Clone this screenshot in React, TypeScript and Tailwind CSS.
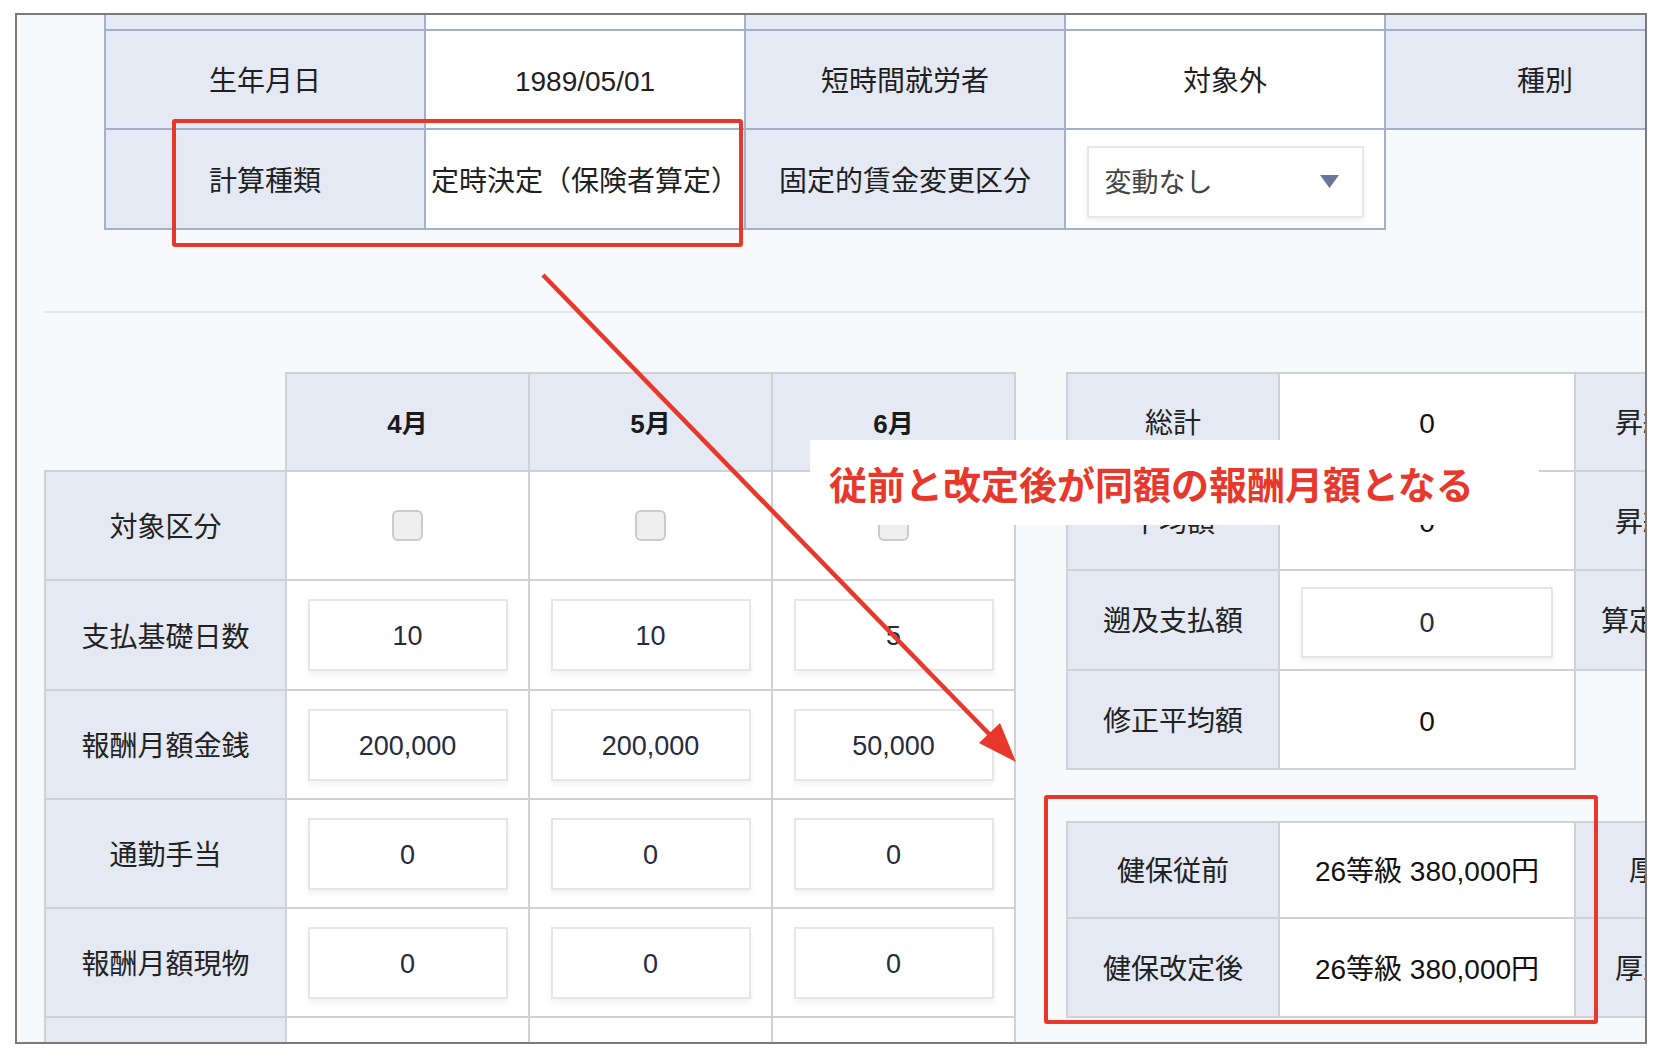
import React from 'react';

// colours picked from the screenshot
const HEAD = 'bg-[#e5e9f3]';
const TOP_LINE = 'border-[#a3b0cc]';
const GRID_LINE = 'border-[#d0d1d4]';

type TopCell = { head?: boolean; content?: React.ReactNode };

const Dropdown: React.FC<{ value: string }> = ({ value }) => (
  <div className="w-[277px] h-[72px] bg-white border-2 border-[#e8e8e8] shadow-[0_3px_6px_rgba(0,0,0,0.06)] flex items-center justify-between pl-[16px] pr-[23px]">
    <span className="text-[27px] text-[#444] pt-[3px]">{value}</span>
    <svg width="19" height="13" viewBox="0 0 19 13">
      <polygon points="0,0 19,0 9.5,13" fill="#6b7399" />
    </svg>
  </div>
);

const topRows: { h: string; cells: TopCell[] }[] = [
  { h: 'h-[100px]', cells: [{ head: true }, {}, { head: true }, {}, { head: true }] },
  {
    h: 'h-[99px]',
    cells: [
      { head: true, content: '生年月日' },
      { content: '1989/05/01' },
      { head: true, content: '短時間就労者' },
      { content: '対象外' },
      { head: true, content: '種別' },
    ],
  },
  {
    h: 'h-[100px]',
    cells: [
      { head: true, content: '計算種類' },
      { content: '定時決定（保険者算定）' },
      { head: true, content: '固定的賃金変更区分' },
      { content: <Dropdown value="変動なし" /> },
    ],
  },
];

const InputBox: React.FC<{ value: string; w?: string; h?: string }> = ({ value, w = 'w-[200px]', h = 'h-[72px]' }) => (
  <div className={`${w} ${h} bg-white border-2 border-[#e6e6e6] shadow-[0_4px_6px_rgba(0,0,0,0.05)] flex items-center justify-center pt-[3px] text-[27px] text-[#262b40]`}>
    {value}
  </div>
);

const Checkbox = () => (
  <div className="w-[31px] h-[31px] rounded-[6px] border-2 border-[#cbcbcb] bg-[#efefef]" />
);

const monthRows: { label: string; h: string; check?: boolean; vals?: string[] }[] = [
  { label: '対象区分', h: 'h-[109px]', check: true },
  { label: '支払基礎日数', h: 'h-[110px]', vals: ['10', '10', '5'] },
  { label: '報酬月額金銭', h: 'h-[109px]', vals: ['200,000', '200,000', '50,000'] },
  { label: '通勤手当', h: 'h-[109px]', vals: ['0', '0', '0'] },
  { label: '報酬月額現物', h: 'h-[109px]', vals: ['0', '0', '0'] },
  { label: '', h: 'h-[110px]' },
];

type SideRow = { h: string; label: string; value: React.ReactNode; extra?: string };

const sideRows: SideRow[] = [
  { h: 'h-[100px]', label: '総計', value: '0', extra: '昇給差の月' },
  { h: 'h-[99px]', label: '平均額', value: '0', extra: '昇給差月額' },
  { h: 'h-[100px]', label: '遡及支払額', value: <InputBox value="0" w="w-[252px]" h="h-[71px]" />, extra: '算定基礎届出' },
  { h: 'h-[99px]', label: '修正平均額', value: '0' },
];

const gradeRows: SideRow[] = [
  { h: 'h-[98px]', label: '健保従前', value: '26等級 380,000円', extra: '厚生従前' },
  { h: 'h-[99px]', label: '健保改定後', value: '26等級 380,000円', extra: '厚生改定後' },
];

const SideTable: React.FC<{ rows: SideRow[] }> = ({ rows }) => (
  <div className="flex flex-col">
    {rows.map((r, i) => (
      <div key={r.label} className={`flex ${r.h} shrink-0`}>
        <div className={`w-[214px] shrink-0 ${HEAD} border-l-2 border-r-2 border-b-2 ${i === 0 ? 'border-t-2' : ''} ${GRID_LINE} flex items-center justify-center pt-[4px] text-[28px] text-[#222]`}>
          {r.label}
        </div>
        <div className={`w-[296px] shrink-0 bg-white border-r-2 border-b-2 ${i === 0 ? 'border-t-2' : ''} ${GRID_LINE} flex items-center justify-center pt-[4px] text-[28px] text-[#111]`}>
          {r.value}
        </div>
        {r.extra && (
          <div className={`w-[220px] shrink-0 ${HEAD} border-r-2 border-b-2 ${i === 0 ? 'border-t-2' : ''} ${GRID_LINE} flex items-center justify-center pt-[4px] text-[28px] text-[#222] whitespace-nowrap`}>
            {r.extra}
          </div>
        )}
      </div>
    ))}
  </div>
);

export default function App() {
  return (
    <div className="relative w-[1654px] h-[1058px] bg-white overflow-hidden pt-[13px] pl-[15px] font-['Liberation_Sans','Noto_Sans_CJK_JP',sans-serif]">
      {/* framed screenshot area */}
      <div className="w-[1632px] h-[1031px] border-2 border-[#7a7a7a] bg-[#f8f9fb] overflow-hidden">
        {/* employee info table, scrolled so its first row is cut */}
        <div className={`ml-[87px] mt-[-84px] border-l-2 ${TOP_LINE} w-max`}>
          {topRows.map((row, ri) => (
            <div key={ri} className={`flex ${row.h}`}>
              {row.cells.map((c, ci) => (
                <div
                  key={ci}
                  className={`w-[320px] shrink-0 border-r-2 border-b-2 ${TOP_LINE} ${c.head ? HEAD : 'bg-white'} flex items-center justify-center pt-[5px] text-[28px] text-[#1f1f1f] whitespace-nowrap`}
                >
                  {c.content}
                </div>
              ))}
            </div>
          ))}
        </div>

        <div className="mt-[81px] ml-[27px] h-[2px] bg-[#e3e5ea]" />

        <div className="mt-[59px] flex items-start">
          {/* monthly table */}
          <div className="ml-[27px] flex flex-col shrink-0">
            <div className="flex h-[100px]">
              <div className={`w-[243px] border-r-2 border-b-2 ${GRID_LINE}`} />
              {['4月', '5月', '6月'].map((m) => (
                <div key={m} className={`w-[243px] ${HEAD} border-t-2 border-r-2 border-b-2 ${GRID_LINE} flex items-center justify-center pt-[4px] text-[26px] font-bold text-[#1a1a1a]`}>
                  {m}
                </div>
              ))}
            </div>
            {monthRows.map((r, i) => (
              <div key={i} className={`flex ${r.h} shrink-0`}>
                <div className={`w-[243px] ${HEAD} border-l-2 border-r-2 border-b-2 ${GRID_LINE} flex items-center justify-center pt-[5px] text-[28px] text-[#222]`}>
                  {r.label}
                </div>
                {[0, 1, 2].map((k) => (
                  <div key={k} className={`w-[243px] bg-white border-r-2 border-b-2 ${GRID_LINE} flex items-center justify-center`}>
                    {r.check && <Checkbox />}
                    {r.vals && <InputBox value={r.vals[k]} />}
                  </div>
                ))}
              </div>
            ))}
          </div>

          {/* totals and grades */}
          <div className="ml-[50px] flex flex-col shrink-0">
            <SideTable rows={sideRows} />
            <div className="mt-[51px]">
              <SideTable rows={gradeRows} />
            </div>
          </div>
        </div>
      </div>

      {/* annotation overlays */}
      <div className="absolute left-[172px] top-[119px] w-[571px] h-[128px] border-4 border-[#e8372b] rounded-[3px]" />
      <div className="absolute left-[1044px] top-[795px] w-[554px] h-[229px] border-4 border-[#e8372b] rounded-[3px]" />
      <svg className="absolute left-0 top-0" width="1654" height="1058" viewBox="0 0 1654 1058">
        <line x1="543" y1="275" x2="992" y2="737" stroke="#e8372b" strokeWidth="4.5" />
        <polygon points="1016,762 979,743 1000,723" fill="#e8372b" />
      </svg>
      <div className="absolute left-[810px] top-[440px] w-[729px] h-[85px] bg-white flex items-center pl-[19px]">
        <span className="text-[38px] font-bold text-[#e8372b] font-['Noto_Sans_CJK_JP',sans-serif] leading-none">
          従前と改定後が同額の報酬月額となる
        </span>
      </div>
    </div>
  );
}
